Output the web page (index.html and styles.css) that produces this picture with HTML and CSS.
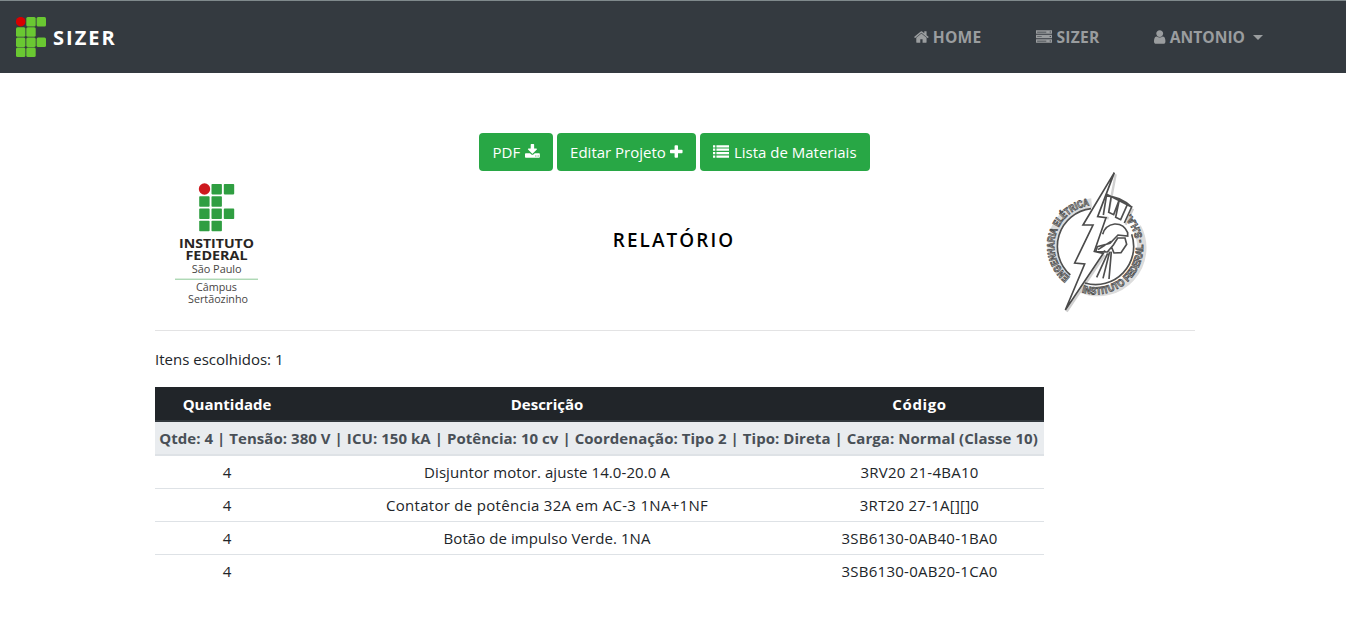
FILE: index.html
```html
<!DOCTYPE html>
<html lang="pt-br">
<head>
<meta charset="utf-8">
<title>Sizer</title>
<link rel="stylesheet" href="styles.css">
</head>
<body>
<nav class="navbar">
  <a class="brand">
    <svg class="brand-logo" viewBox="0 0 30 40"><circle cx="4.7" cy="4.7" r="4.8" fill="#d80000"/><g fill="#6ac832"><rect x="10.3" y="0" width="9.4" height="9.4" rx="1.5"/><rect x="20.6" y="0" width="9.4" height="9.4" rx="1.5"/><rect x="0" y="10.3" width="9.4" height="9.4" rx="1.5"/><rect x="10.3" y="10.3" width="9.4" height="9.4" rx="1.5"/><rect x="0" y="20.5" width="9.4" height="9.4" rx="1.5"/><rect x="10.3" y="20.5" width="9.4" height="9.4" rx="1.5"/><rect x="20.6" y="20.5" width="9.4" height="9.4" rx="1.5"/><rect x="0" y="30.6" width="9.4" height="9.4" rx="1.5"/><rect x="10.3" y="30.6" width="9.4" height="9.4" rx="1.5"/></g></svg>
    <span class="brand-name">SIZER</span>
  </a>
  <div class="menu">
    <a class="menu-item home"><svg class="icon" viewBox="0 0 1664 1792"><path d="M1408 992v480q0 26-19 45t-45 19h-384v-384h-256v384h-384q-26 0-45-19t-19-45v-480q0-1 .5-3t.5-3l575-474 575 474q1 2 1 6zm223-69l-62 74q-8 9-21 11h-3q-13 0-21-7l-692-577-692 577q-12 8-24 7-13-2-21-11l-62-74q-8-10-7-23.5t11-21.5l719-599q32-26 76-26t76 26l244 204v-195q0-14 9-23t23-9h192q14 0 23 9t9 23v408l219 182q10 8 11 21.5t-7 23.5z"/></svg><span>HOME</span></a>
    <a class="menu-item sizer"><svg class="icon" viewBox="0 0 1792 1792"><path fill-rule="evenodd" d="M0 128h1792v400H0zM128 310v70h1024v-70zM1536 270v110h128V270zM0 630h1792v400H0zM128 800v70h512v-70zM1536 780v110h128V780zM0 1140h1792v400H0zM128 1320v70h1024v-70zM1536 1290v110h128v-110z"/></svg><span>SIZER</span></a>
    <a class="menu-item user"><svg class="icon" viewBox="0 0 1280 1792"><path d="M1280 1399q0 109-62.5 187t-150.5 78h-854q-88 0-150.5-78t-62.5-187q0-85 8.5-160.5t31.5-152 58.5-131 94-89 134.5-34.5q131 128 313 128t313-128q76 0 134.5 34.5t94 89 58.5 131 31.5 152 8.5 160.5zm-256-887q0 159-112.5 271.5t-271.5 112.5-271.5-112.5-112.5-271.5 112.5-271.5 271.5-112.5 271.5 112.5 112.5 271.5z"/></svg><span>ANTONIO</span><i class="caret"></i></a>
  </div>
</nav>
<main class="page">
  <div class="actions">
    <a class="btn pdf"><span>PDF</span><svg class="icon" viewBox="0 0 1664 1792"><path d="M1280 1344q0-26-19-45t-45-19-45 19-19 45 19 45 45 19 45-19 19-45zm256 0q0-26-19-45t-45-19-45 19-19 45 19 45 45 19 45-19 19-45zm128-224v320q0 40-28 68t-68 28h-1472q-40 0-68-28t-28-68v-320q0-40 28-68t68-28h465l135 136q58 56 136 56t136-56l136-136h464q40 0 68 28t28 68zm-325-569q17 41-14 70l-448 448q-18 19-45 19t-45-19l-448-448q-31-29-14-70 17-39 59-39h256v-448q0-26 19-45t45-19h256q26 0 45 19t19 45v448h256q42 0 59 39z"/></svg></a>
    <a class="btn edit"><span>Editar Projeto</span><svg class="icon" viewBox="0 0 1408 1792"><path d="M1408 736v192q0 40-28 68t-68 28h-416v416q0 40-28 68t-68 28h-192q-40 0-68-28t-28-68v-416h-416q-40 0-68-28t-28-68v-192q0-40 28-68t68-28h416v-416q0-40 28-68t68-28h192q40 0 68 28t28 68v416h416q40 0 68 28t28 68z"/></svg></a>
    <a class="btn list"><svg class="icon" viewBox="0 0 1792 1792"><path d="M0 128h256v256H0zM384 128h1408v256H384zM0 512h256v256H0zM384 512h1408v256H384zM0 896h256v256H0zM384 896h1408v256H384zM0 1280h256v256H0zM384 1280h1408v256H384z"/></svg><span>Lista de Materiais</span></a>
  </div>
  <header class="report-head">
    <svg class="campus" viewBox="0 0 105 140">
      <circle cx="39.5" cy="14" r="5.7" fill="#cd191e"/>
      <g fill="#2f9e41"><rect x="46.5" y="9" width="10.4" height="10.4" rx=".8"/><rect x="58.8" y="9" width="10.4" height="10.4" rx=".8"/><rect x="34.2" y="21.3" width="10.4" height="10.4" rx=".8"/><rect x="46.5" y="21.3" width="10.4" height="10.4" rx=".8"/><rect x="34.2" y="33.6" width="10.4" height="10.4" rx=".8"/><rect x="46.5" y="33.6" width="10.4" height="10.4" rx=".8"/><rect x="58.8" y="33.6" width="10.4" height="10.4" rx=".8"/><rect x="34.2" y="45.8" width="10.4" height="10.4" rx=".8"/><rect x="46.5" y="45.8" width="10.4" height="10.4" rx=".8"/></g>
      <g class="campus-name"><text x="51.5" y="73" textLength="75" lengthAdjust="spacingAndGlyphs">INSTITUTO</text><text x="51.5" y="85.2" textLength="62" lengthAdjust="spacingAndGlyphs">FEDERAL</text></g>
      <g class="campus-place"><text x="51.7" y="98" textLength="50" lengthAdjust="spacingAndGlyphs">São Paulo</text><text x="51.5" y="116.2" textLength="41" lengthAdjust="spacingAndGlyphs">Câmpus</text><text x="53" y="128.4" textLength="60" lengthAdjust="spacingAndGlyphs">Sertãozinho</text></g>
      <path d="M10 104.2h83" stroke="#8cc896" stroke-width="1"/>
    </svg>
    <h1 class="title">RELATÓRIO</h1>
    <svg class="emblem" viewBox="0 0 360 465">
      <defs><path id="ring-left" d="M104 337A121 121 0 0 1 172 121"/><path id="ring-bottom" d="M140 382A143 143 0 0 0 276 138"/></defs>
      <g class="shadow"><path class="band" d="M98 345A131 131 0 0 1 170 114M305 187A131 131 0 0 1 140 370"/><path transform="translate(4 5)" d="M238 23L213 158M205 265L91 435M290 126L268 174"/></g>
      <path class="line" d="M106 330A114 114 0 0 1 168 131M290 208A114 114 0 0 1 150 354"/>
      <g class="ring-text"><text><textPath href="#ring-left" textLength="284" lengthAdjust="spacingAndGlyphs">ENGENHARIA ELÉTRICA</textPath></text><text><textPath href="#ring-bottom" textLength="374" lengthAdjust="spacingAndGlyphs">INSTITUTO FEDERAL - S.H.A.</textPath></text></g>
      <path class="line helmet" d="M205 150L215 88L290 126L268 174M213 93Q255 93 290 126M229 92L221 142L236 149L253 104M253 104L242 157L257 164L277 119"/>
      <path class="line" d="M203 208Q210 181 239 177Q267 176 278 203V213L249 210L225 235L187 245L182 260L217 261L235 240L248 219L270 219L275 238L258 263L237 264L229 245M218 265L185 337M224 260L204 340M229 260L222 342M211 257L184 272M189 254L228 229"/>
      <path class="bolt" d="M238 23L144 180L174 180L119 294L149 297L91 435L205 265L178 259L213 158L188 155Z"/>
    </svg>
  </header>
  <p class="chosen">Itens escolhidos: 1</p>
  <table class="items">
    <colgroup><col class="c-qty"><col class="c-desc"><col class="c-code"></colgroup>
    <thead><tr class="head"><th>Quantidade</th><th>Descrição</th><th class="h-code">Código</th></tr>
    <tr class="group"><th colspan="3">Qtde: 4 | Tensão: 380 V | ICU: 150 kA | Potência: 10 cv | Coordenação: Tipo 2 | Tipo: Direta | Carga: Normal (Classe 10)</th></tr></thead>
    <tbody>
    <tr><td>4</td><td class="desc">Disjuntor motor. ajuste 14.0-20.0 A</td><td class="code">3RV20 21-4BA10</td></tr>
    <tr><td>4</td><td class="desc wide">Contator de potência 32A em AC-3 1NA+1NF</td><td class="code">3RT20 27-1A[][]0</td></tr>
    <tr><td>4</td><td class="desc">Botão de impulso Verde. 1NA</td><td class="code">3SB6130-0AB40-1BA0</td></tr>
    <tr><td>4</td><td></td><td class="code">3SB6130-0AB20-1CA0</td></tr>
    </tbody>
  </table>
</main>
</body>
</html>
```
FILE: styles.css
```css
* { box-sizing: border-box; }
body { margin: 0; background: #fff; color: #212529; font: 15px/24px "Segoe UI", "Open Sans", sans-serif; overflow: hidden; }
.navbar { height: 73px; background: #343a40; border-top: 1px solid #7f898c; display: flex; justify-content: space-between; align-items: center; padding: 0 83px 0 16px; }
.brand { display: flex; align-items: center; gap: 7px; color: #fff; }
.brand-logo { width: 30px; height: 40px; }
.brand-name { font-size: 20px; font-weight: 700; letter-spacing: 2px; padding-top: 1px; }
.menu { display: flex; color: #9a9d9f; font-size: 15.6px; font-weight: 700; }
.menu-item { display: flex; align-items: center; gap: 4px; }
.sizer { margin-left: 55px; }
.user { margin-left: 55px; }
.home { letter-spacing: .2px; }
.sizer { letter-spacing: .25px; }
.icon { height: 16px; fill: currentColor; flex: none; display: block; }
.caret { border: 5px solid transparent; border-top-color: currentColor; border-bottom: 0; margin-left: 4px; }
.page { width: 1040px; margin-left: 155px; padding-top: 60px; }
.actions { display: flex; gap: 4px; padding-left: 324px; }
.btn { height: 38px; border-radius: 4px; background: #28a745; color: #fff; display: flex; align-items: center; justify-content: center; gap: 4.5px; white-space: nowrap; }
.pdf { width: 74px; }
.edit { width: 139px; }
.list { width: 170px; }
.report-head { height: 160px; border-bottom: 1px solid #e3e3e4; display: grid; grid-template-columns: 115px 1fr 120px; padding: 0 40px 0 10px; }
.campus { width: 105px; height: 140px; margin-top: 4px; }
.campus text { font-family: "Open Sans", sans-serif; text-anchor: middle; }
.campus-name { font-size: 12.5px; font-weight: 700; fill: #282523; }
.campus-place { font-size: 11px; fill: #474543; }
.title { margin: 57px 0 0 33px; font-size: 18.9px; line-height: 24px; font-weight: 600; letter-spacing: 2.1px; color: #000; text-align: center; }
.emblem { width: 120px; height: 155px; margin-top: -6px; }
.ring-text { font: 700 31px "Liberation Sans", sans-serif; fill: #d0d0d0; stroke: #4c4c4c; stroke-width: 2.5; }
.line { fill: none; stroke: #4f4f4f; stroke-width: 5; }
.helmet { fill: #fff; }
.shadow path { fill: none; stroke: #d0d0d0; stroke-width: 7; }
.shadow .band { stroke: #dcdcdc; stroke-width: 28; }
.bolt { fill: #fff; stroke: #4a4a4a; stroke-width: 5; }
.chosen { margin: 16px 0; }
.items { width: 889px; table-layout: fixed; border-collapse: separate; border-spacing: 0; text-align: center; white-space: nowrap; }
.c-qty { width: 144px; }
.c-desc { width: 496px; }
.items td { height: 33px; padding: 0; border-top: 1px solid #dee2e6; }
.items td.desc { letter-spacing: .07px; }
.items td.wide { letter-spacing: .3px; }
.items td.code { letter-spacing: .25px; }
.items th { padding: 0; }
.items tr.head th { height: 35px; background: #212529; color: #fff; border-bottom: 2px solid #32383e; }
.items th.h-code { letter-spacing: .6px; }
.items tr.group th { height: 33px; background: #e9ecef; color: #495057; border-bottom: 1px solid #dee2e6; letter-spacing: .05px; padding-right: 2px; }
```
